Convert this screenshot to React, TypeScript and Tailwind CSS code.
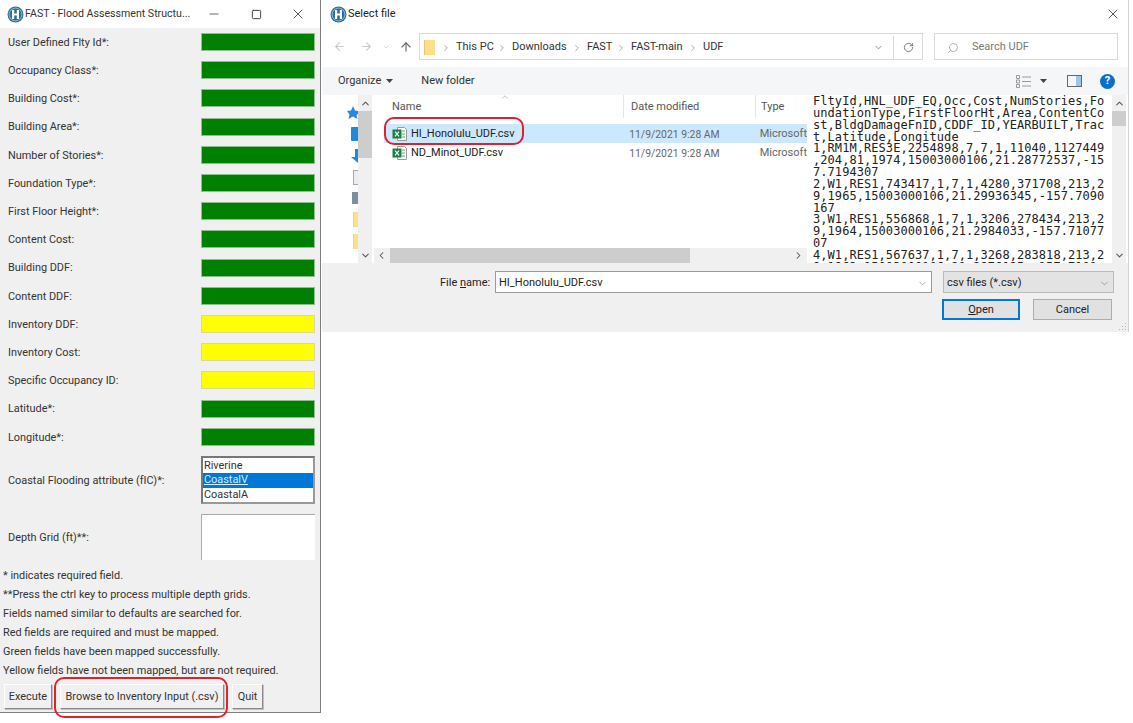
import { ArrowLeft, ArrowRight, ArrowUp, ChevronDown, ChevronLeft, ChevronRight, ChevronUp, Minus, RotateCw, Search, Square, X } from "lucide-react";

interface Field {
  label: string;
  color: "green" | "yellow";
}

const fields: Field[] = [
  { label: "User Defined Flty Id*:", color: "green" },
  { label: "Occupancy Class*:", color: "green" },
  { label: "Building Cost*:", color: "green" },
  { label: "Building Area*:", color: "green" },
  { label: "Number of Stories*:", color: "green" },
  { label: "Foundation Type*:", color: "green" },
  { label: "First Floor Height*:", color: "green" },
  { label: "Content Cost:", color: "green" },
  { label: "Building DDF:", color: "green" },
  { label: "Content DDF:", color: "green" },
  { label: "Inventory DDF:", color: "yellow" },
  { label: "Inventory Cost:", color: "yellow" },
  { label: "Specific Occupancy ID:", color: "yellow" },
  { label: "Latitude*:", color: "green" },
  { label: "Longitude*:", color: "green" },
];

const notes = [
  "* indicates required field.",
  "**Press the ctrl key to process multiple depth grids.",
  "Fields named similar to defaults are searched for.",
  "Red fields are required and must be mapped.",
  "Green fields have been mapped successfully.",
  "Yellow fields have not been mapped, but are not required.",
];

const preview = [
  "FltyId,HNL_UDF_EQ,Occ,Cost,NumStories,Fo",
  "undationType,FirstFloorHt,Area,ContentCo",
  "st,BldgDamageFnID,CDDF_ID,YEARBUILT,Trac",
  "t,Latitude,Longitude",
  "1,RM1M,RES3E,2254898,7,7,1,11040,1127449",
  ",204,81,1974,15003000106,21.28772537,-15",
  "7.7194307",
  "2,W1,RES1,743417,1,7,1,4280,371708,213,2",
  "9,1965,15003000106,21.29936345,-157.7090",
  "167",
  "3,W1,RES1,556868,1,7,1,3206,278434,213,2",
  "9,1964,15003000106,21.2984033,-157.71077",
  "07",
  "4,W1,RES1,567637,1,7,1,3268,283818,213,2",
  "9,1963,15003000106,21.2976125,-157.7101",
];

function AppIcon() {
  return (
    <svg width="17" height="17" viewBox="0 0 17 17" className="shrink-0">
      <circle cx="8.5" cy="8.5" r="8" fill="#2a6f9e" />
      <circle cx="8.5" cy="8.5" r="6.4" fill="none" stroke="#a9cbe0" strokeWidth="0.8" />
      <path d="M5 4h2.2v3.4h2.6V4H12v9H9.8V9.4H7.2V13H5z" fill="#fff" />
    </svg>
  );
}

function ExcelIcon() {
  return (
    <svg width="16" height="16" viewBox="0 0 16 16" className="shrink-0">
      <path d="M5.5 1.5h7l2 2v11h-9z" fill="#fff" stroke="#9a9a9a" />
      <path d="M10 5h3M10 8h3M10 11h3" stroke="#4caf6e" />
      <rect x="0.5" y="3.5" width="9" height="9" fill="#1e7d45" />
      <path d="M3 5.700l4 4.600M7 5.700l-4 4.600" stroke="#fff" strokeWidth="1.2" />
    </svg>
  );
}

function Folder({ width = 12, height = 15 }: { width?: number; height?: number }) {
  return (
    <svg width={width} height={height} viewBox="0 0 12 15" preserveAspectRatio="none" className="shrink-0">
      <rect x="0" y="0" width="12" height="15" fill="#fbdf8a" />
      <rect x="0" y="0" width="1" height="15" fill="#e8c464" />
    </svg>
  );
}

function TkButton({ children, className }: { children: string; className: string }) {
  return (
    <div
      className={`flex h-[25px] items-center justify-center whitespace-nowrap border border-t-white border-l-white border-r-[#8a8a8a] border-b-[#8a8a8a] bg-[#f0f0f0] pt-[1px] shadow-[1px_1px_0_#c0c0c0] ${className}`}
    >
      {children}
    </div>
  );
}

function FastWindow() {
  return (
    <div className="flex h-[713px] w-[321px] shrink-0 flex-col border-r border-b border-[#7f7f7f] bg-[#f0f0f0] text-[10.9px] text-[#333]">
      <div className="flex h-[28px] items-center bg-white pl-[7px] pr-[1px] text-[10.6px]">
        <AppIcon />
        <span className="ml-[1px] flex-1 whitespace-nowrap">FAST - Flood Assessment Structu...</span>
        <div className="flex w-[42px] shrink-0 justify-center">
          <Minus className="size-[14px] text-[#555]" strokeWidth={1.5} />
        </div>
        <div className="flex w-[42px] shrink-0 justify-center">
          <Square className="size-[11px] text-[#333]" strokeWidth={2} />
        </div>
        <div className="flex w-[42px] shrink-0 justify-center">
          <X className="size-[16px] text-[#555]" strokeWidth={1.5} />
        </div>
      </div>

      {fields.map((field) => (
        <div key={field.label} className="flex h-[28.2px] shrink-0 items-center pl-2 pr-[5px]">
          <span className="flex-1 pt-[2px]">{field.label}</span>
          <div
            className={
              field.color === "green"
                ? "h-[18px] w-[114px] border border-[#8cc08c] bg-[#008000]"
                : "h-[18px] w-[114px] border border-[#d8d8a0] bg-[#ffff00]"
            }
          />
        </div>
      ))}

      <div className="flex h-[58px] shrink-0 items-center pl-2 pr-[5px]">
        <span className="flex-1 pt-[2px]">Coastal Flooding attribute (fIC)*:</span>
        <div className="flex h-[48px] w-[114px] flex-col border-2 border-t-[#777] border-l-[#777] border-r-[#999] border-b-[#999] bg-white pt-[1px] leading-[14.5px]">
          <span className="pl-[1px]">Riverine</span>
          <span className="bg-[#0078d7] pl-[1px] text-[#d8ecff] underline">CoastalV</span>
          <span className="pl-[1px]">CoastalA</span>
        </div>
      </div>

      <div className="flex h-[56px] shrink-0 items-center pl-2 pr-[5px]">
        <span className="flex-1 pt-[2px]">Depth Grid (ft)**:</span>
        <div className="h-[46px] w-[114px] border-t border-l border-[#aaa] bg-white" />
      </div>

      <div className="flex flex-col pl-[3px] pt-[1px] leading-[19px]">
        {notes.map((note) => (
          <span key={note}>{note}</span>
        ))}
      </div>

      <div className="mt-[4px] flex pl-[4px]">
        <TkButton className="w-[48px]">Execute</TkButton>
        <TkButton className="ml-[8px] w-[164px]">Browse to Inventory Input (.csv)</TkButton>
        <TkButton className="ml-[8px] w-[31px]">Quit</TkButton>
      </div>
    </div>
  );
}

function AddressCrumb({ label, width }: { label: string; width: string }) {
  return (
    <div className={`flex items-center whitespace-nowrap ${width}`}>
      <ChevronRight className="mx-[5.5px] size-[10px] shrink-0 text-[#777]" strokeWidth={1.5} />
      <span>{label}</span>
    </div>
  );
}

function VScroll({ thumb }: { thumb: string }) {
  return (
    <div className="flex h-full w-[14px] shrink-0 flex-col bg-[#f0f0f0]">
      <div className="flex h-[16px] items-center justify-center">
        <ChevronUp className="size-[11px] text-[#555]" strokeWidth={2.2} />
      </div>
      <div className="flex-1">
        <div className={`bg-[#cdcdcd] ${thumb}`} />
      </div>
      <div className="flex h-[16px] items-center justify-center">
        <ChevronDown className="size-[11px] text-[#555]" strokeWidth={2.2} />
      </div>
    </div>
  );
}

function FileRow({ name, selected }: { name: string; selected?: boolean }) {
  return (
    <div className={`flex h-[19px] items-center whitespace-nowrap pl-[8px] ${selected ? "bg-[#cce8ff]" : ""}`}>
      <ExcelIcon />
      <span className="ml-[3px] w-[219px] pt-[2px] text-[#222]">{name}</span>
      <span className="w-[131px] pt-[2px] text-[10.4px] text-[#666]">11/9/2021 9:28 AM</span>
      <span className="pt-[2px] text-[#666]">Microsoft</span>
    </div>
  );
}

function SelectDialog() {
  return (
    <div className="ml-[1px] flex h-[332px] w-[807px] shrink-0 flex-col border-r border-[#d0d0d0] bg-white text-[11px] text-[#333]">
      <div className="flex h-[28px] shrink-0 items-center pl-[8px] pr-[7px]">
        <AppIcon />
        <span className="ml-[1px] flex-1 text-[11px] text-[#222]">Select file</span>
        <X className="size-[16px] text-[#555]" strokeWidth={1.5} />
      </div>

      <div className="mt-[5px] flex h-[27px] shrink-0 items-center">
        <ArrowLeft className="ml-[11px] size-[13px] text-[#c8c8c8]" strokeWidth={2} />
        <ArrowRight className="ml-[14px] size-[13px] text-[#c8c8c8]" strokeWidth={2} />
        <ChevronDown className="ml-[9px] size-[8px] text-[#c8c8c8]" strokeWidth={2} />
        <ArrowUp className="ml-[9px] size-[14px] text-[#666]" strokeWidth={2} />
        <div className="ml-[6px] flex h-full w-[504px] items-center border border-[#d9d9d9] pl-[4px] pt-[2px]">
          <Folder width={11} height={15} />
          <AddressCrumb label="This PC" width="w-[56px]" />
          <AddressCrumb label="Downloads" width="w-[75px]" />
          <AddressCrumb label="FAST" width="w-[44px]" />
          <AddressCrumb label="FAST-main" width="w-[72px]" />
          <AddressCrumb label="UDF" width="w-[50px]" />
          <ChevronDown className="ml-auto mr-[9px] size-[11px] text-[#666]" strokeWidth={1.5} />
          <div className="flex h-full w-[29px] items-center justify-center border-l border-[#d9d9d9]">
            <RotateCw className="size-[11px] text-[#666]" strokeWidth={1.8} />
          </div>
        </div>
        <div className="ml-[11px] flex h-full w-[184px] items-center border border-[#d9d9d9] pl-[12px] pt-[2px] text-[#777]">
          <Search className="size-[12px] -scale-x-100 text-[#999]" strokeWidth={1.5} />
          <span className="ml-[13px]">Search UDF</span>
        </div>
      </div>

      <div className="mt-[7px] flex h-[28px] shrink-0 items-center bg-[#f5f6f7] pl-[16px] pr-[13px]">
        <span>Organize</span>
        <svg width="7" height="4" viewBox="0 0 7 4" className="ml-[5px]">
          <path d="M0 0h7L3.5 4z" fill="#444" />
        </svg>
        <span className="ml-[28px] flex-1">New folder</span>
        <svg width="15" height="13" viewBox="0 0 15 13">
          <path d="M.5.5h3v3h-3zM.5 5h3v3h-3zM.5 9.500h3v3h-3zM6 2h9M6 6.500h9M6 11h9" fill="none" stroke="#9a9a9a" />
        </svg>
        <svg width="7" height="4" viewBox="0 0 7 4" className="ml-[9px]">
          <path d="M0 0h7L3.5 4z" fill="#444" />
        </svg>
        <div className="ml-[20px] flex h-[12px] w-[15px] justify-end border border-[#666]">
          <div className="w-[5px] bg-[#9cc7ea]" />
        </div>
        <div className="ml-[18px] flex size-[15px] items-center justify-center rounded-full bg-[#0a6fc9] text-[11px] font-bold text-white">
          ?
        </div>
      </div>

      <div className="flex h-[168px] shrink-0">
        <div className="flex w-[36px] shrink-0 flex-col items-end overflow-hidden pt-[11px]">
          <svg width="11" height="13" viewBox="0 0 11 13">
            <path d="M6 0l2 4.500 3 .5v3l-1.500 1 1 4-4.500-2.500L1.500 13l1-4.500L0 5l4-.5z" fill="#2b88d8" />
          </svg>
          <div className="mt-[8px] h-[14px] w-[7px] rounded-l-[1px] bg-[#1e8ad8]" />
          <svg width="7" height="14" viewBox="0 0 7 14" className="mt-[8px]">
            <path d="M4 0h3v14L0 8h4z" fill="#1e8ad8" />
          </svg>
          <div className="mt-[7px] h-[15px] w-[5px] border-y border-l border-[#aaa] bg-[#e8eef4]" />
          <div className="mt-[7px] h-[12px] w-[6px] bg-[#7d8f9c]" />
          <div className="mt-[8px]">
            <Folder width={5} height={15} />
          </div>
          <div className="mt-[7px]">
            <Folder width={5} height={15} />
          </div>
        </div>
        <VScroll thumb="h-[47px]" />

        <div className="flex w-[435px] shrink-0 flex-col pl-[2px]">
          <div className="relative flex h-[23px] shrink-0 items-center pl-[18px] text-[#555]">
            <ChevronUp className="absolute left-[126px] top-[-3px] size-[10px] text-[#888]" strokeWidth={1.2} />
            <span className="w-[231px] pt-[2px]">Name</span>
            <span className="w-[132px] border-l border-[#e5e5e5] pl-[7px] pt-[1px] leading-[22px]">Date modified</span>
            <span className="border-l border-[#e5e5e5] pl-[5px] pt-[1px] leading-[22px]">Type</span>
          </div>
          <div className="mt-[6px] pl-[10px]">
            <FileRow name="HI_Honolulu_UDF.csv" selected />
            <FileRow name="ND_Minot_UDF.csv" />
          </div>
          <div className="mt-auto flex h-[15px] shrink-0 items-center bg-[#f0f0f0]">
            <ChevronLeft className="ml-[2px] size-[11px] text-[#555]" strokeWidth={2.2} />
            <div className="ml-[3px] h-full w-[300px] bg-[#cdcdcd]" />
            <ChevronRight className="ml-auto mr-[3px] size-[11px] text-[#555]" strokeWidth={2.2} />
          </div>
        </div>

        <div className="w-[305px] shrink-0 overflow-hidden bg-white pl-[6px] pt-[1px] font-['DejaVu_Sans_Mono',monospace] text-[12px] leading-[11.85px] tracking-[0.06px] text-[#222]">
          {preview.map((line) => (
            <div key={line} className="whitespace-pre">
              {line}
            </div>
          ))}
        </div>
        <VScroll thumb="h-[15px]" />
      </div>

      <div className="relative flex h-[69px] shrink-0 flex-col bg-[#f0f0f0]">
        <div className="mt-[8px] flex h-[22px] items-center">
          <span className="ml-[118px] w-[55px] pt-[2px] text-[#222]">
            File <span className="underline">n</span>ame:
          </span>
          <div className="flex h-full w-[437px] items-center border border-[#9a9a9a] bg-white pl-[3px] pt-[2px] text-[#222]">
            <span className="flex-1">HI_Honolulu_UDF.csv</span>
            <ChevronDown className="mr-[3px] size-[11px] text-[#777]" strokeWidth={1.3} />
          </div>
          <div className="ml-[11px] flex h-full w-[171px] items-center border border-[#bbb] bg-[#e3e3e3] pl-[3px] pt-[2px] text-[#222]">
            <span className="flex-1">csv files (*.csv)</span>
            <ChevronDown className="mr-[3px] size-[11px] text-[#777]" strokeWidth={1.3} />
          </div>
        </div>
        <div className="mt-[6px] flex h-[21px] pl-[620px] text-[#222]">
          <div className="flex w-[78px] items-center justify-center border-2 border-[#0078d7] bg-[#e1e1e1] pt-[1px]">
            <span>
              <span className="underline">O</span>pen
            </span>
          </div>
          <div className="ml-[13px] flex w-[79px] items-center justify-center border border-[#adadad] bg-[#e1e1e1] pt-[1px]">
            Cancel
          </div>
        </div>
        <svg width="9" height="9" viewBox="0 0 9 9" className="absolute right-[1px] bottom-[1px]">
          <path d="M7 1h1v1H7zM4 4h1v1H4zM7 4h1v1H7zM1 7h1v1H1zM4 7h1v1H4zM7 7h1v1H7z" fill="#b5b5b5" />
        </svg>
      </div>
    </div>
  );
}

export default function App() {
  return (
    <div className="relative flex h-[723px] w-[1133px] items-start overflow-hidden bg-white font-['Roboto',sans-serif]">
      <FastWindow />
      <SelectDialog />
      {/* red callouts drawn over the screenshot */}
      <div className="absolute left-[384px] top-[117px] h-[28px] w-[140px] rounded-[10px] border-2 border-[#e0202c]" />
      <div className="absolute left-[54px] top-[677px] h-[41px] w-[174px] rounded-[10px] border-2 border-[#e0202c]" />
    </div>
  );
}
